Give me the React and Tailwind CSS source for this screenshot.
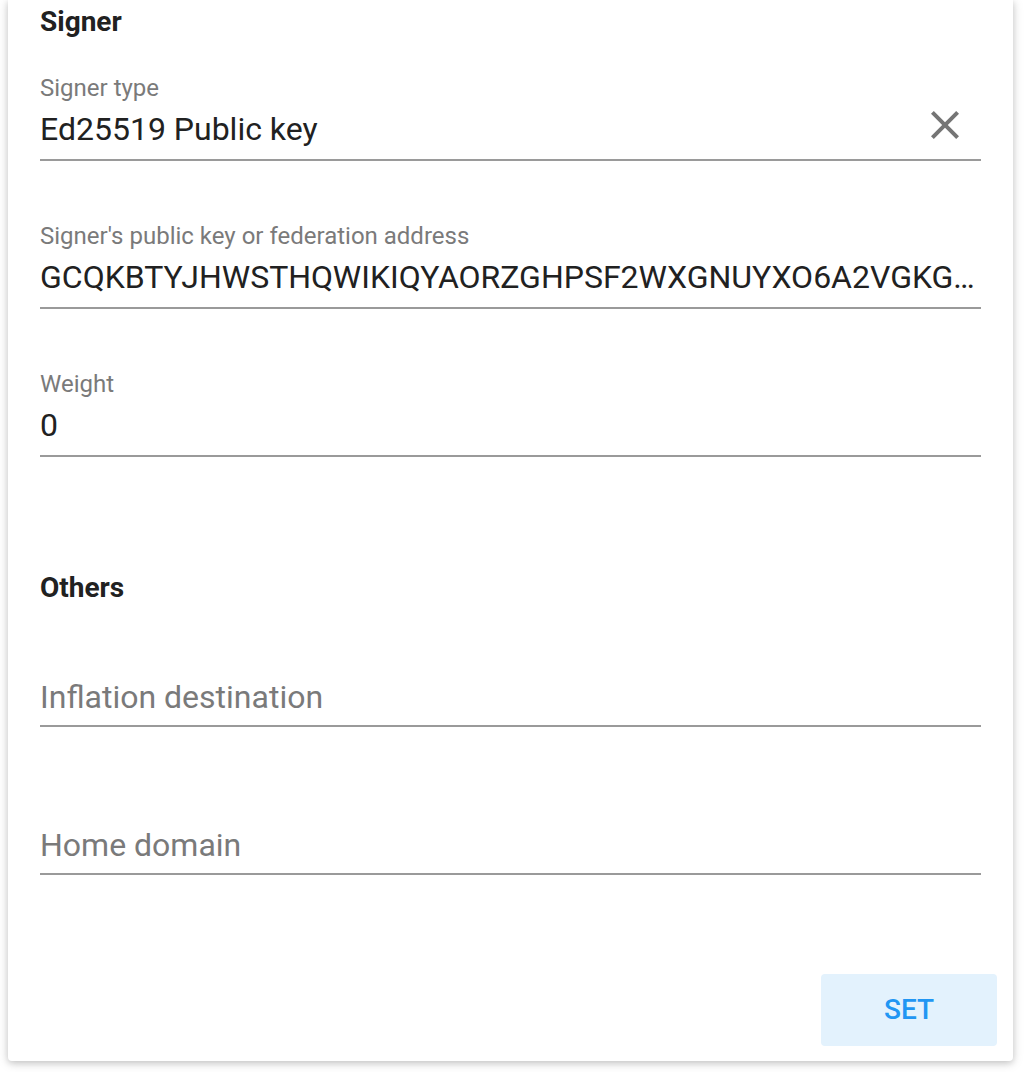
import React from "react";

function Field({ label, value, placeholder, icon }) {
  return (
    <div className="relative">
      {label && (
        <div className="text-[24px] leading-[24px] text-[#7a7a7a] h-[24px] whitespace-nowrap">{label}</div>
      )}
      <div
        className={
          "text-[32px] leading-[32px] h-[32px] whitespace-nowrap " +
          (label ? "mt-[13px] " : "") +
          (placeholder ? "text-[#7a7a7a]" : "text-[#212121]")
        }
      >
        {value || placeholder}
      </div>
      <div className={(placeholder ? "mt-[12px]" : "mt-[14px]") + " h-[2px] bg-[#9a9a9a]"} />
      {icon && (
        <button className="absolute right-[12px] top-[25px] w-[48px] h-[48px] flex items-center justify-center">
          <svg width="48" height="48" viewBox="0 0 24 24" fill="#757575">
            <path d="M19 6.41L17.59 5 12 10.59 6.41 5 5 6.41 10.59 12 5 17.59 6.41 19 12 13.41 17.59 19 19 17.59 13.41 12z" />
          </svg>
        </button>
      )}
    </div>
  );
}

export default function App() {
  return (
    <div
      className="w-[1024px] h-[1072px] bg-white overflow-hidden"
      style={{ fontFamily: "Roboto, 'Noto Sans', sans-serif" }}
    >
      <div className="ml-[8px] w-[1005px] h-[1061px] bg-white rounded-b-[4px] shadow-[0_2px_12px_rgba(0,0,0,0.14),0_2px_6px_rgba(0,0,0,0.14)] flex flex-col px-[32px] pt-[8px]">
        <div className="text-[28px] leading-[28px] h-[28px] font-bold text-[#212121]">Signer</div>
        <div className="mt-[40px]">
          <Field label="Signer type" value="Ed25519 Public key" icon />
        </div>
        <div className="mt-[63px]">
          <Field
            label="Signer's public key or federation address"
            value="GCQKBTYJHWSTHQWIKIQYAORZGHPSF2WXGNUYXO6A2VGKG…"
          />
        </div>
        <div className="mt-[63px]">
          <Field label="Weight" value="0" />
        </div>
        <div className="mt-[117px] text-[28px] leading-[28px] h-[28px] font-bold text-[#212121]">Others</div>
        <div className="mt-[79px]">
          <Field placeholder="Inflation destination" />
        </div>
        <div className="mt-[102px]">
          <Field placeholder="Home domain" />
        </div>
        <div className="flex justify-end mt-[99px] -mr-[16px]">
          <button className="w-[176px] h-[72px] rounded-[4px] bg-[#e3f2fd] text-[#2196f3] text-[28px] font-medium leading-none">
            SET
          </button>
        </div>
      </div>
    </div>
  );
}
